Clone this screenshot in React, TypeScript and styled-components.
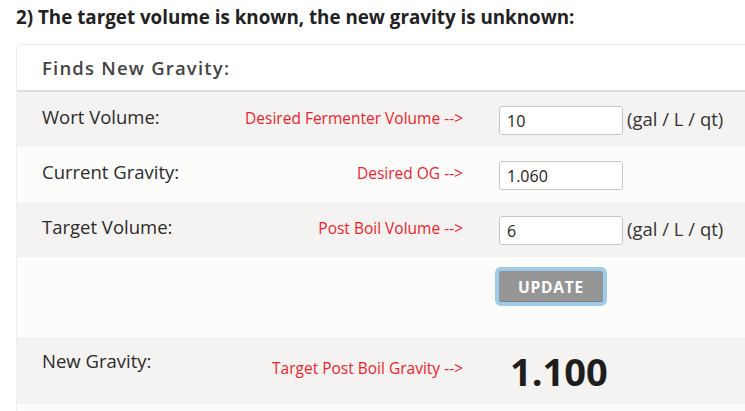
import React from 'react';
import styled, { createGlobalStyle } from 'styled-components';

const GlobalStyle = createGlobalStyle`
  html, body {
    margin: 0;
    padding: 0;
    background: #ffffff;
    overflow: hidden;
  }
  body {
    font-family: "Open Sans", "Liberation Sans", sans-serif;
    color: #333;
  }
`;

const Page = styled.div`
  padding: 4px 0 0 16px;
`;

const Heading = styled.h2`
  margin: 0 0 14px 0;
  font-family: "Open Sans", sans-serif;
  font-weight: 700;
  font-size: 18.8px;
  line-height: 26px;
  color: #222;
  white-space: nowrap;
`;

const Panel = styled.div`
  border: 1px solid #eeeeee;
  border-right: none;
  border-radius: 5px 0 0 0;
  background: #fcfcfb;
  overflow: hidden;
`;

const PanelHeader = styled.div`
  height: 45px;
  border-bottom: 2px solid #dcdcdc;
  background: #ffffff;
  display: flex;
  align-items: center;
  padding-left: 25px;
  font-size: 18.5px;
  font-weight: 600;
  letter-spacing: 1.2px;
  color: #444;
`;

const Row = styled.div<{ $shade: boolean; $h: number }>`
  display: grid;
  grid-template-columns: 200px 221px 160px auto;
  align-items: start;
  height: ${({ $h }) => $h}px;
  background: ${({ $shade }) => ($shade ? '#f4f3f1' : '#fcfcfb')};
  padding-left: 25px;
  box-sizing: border-box;
`;

const Label = styled.div<{ $top: number }>`
  padding-top: ${({ $top }) => $top}px;
  font-size: 18.5px;
  line-height: 24px;
  color: #2b2b2b;
  white-space: nowrap;
`;

const Hint = styled.div<{ $top: number }>`
  padding-top: ${({ $top }) => $top}px;
  text-align: right;
  font-size: 15.5px;
  line-height: 20px;
  color: #f2222c;
  white-space: nowrap;
`;

const InputCell = styled.div`
  padding-top: 14px;
  padding-left: 36px;
`;

const Field = styled.input`
  width: 124px;
  height: 29px;
  box-sizing: border-box;
  border: 1px solid #c6c6c6;
  border-radius: 3px;
  padding: 0 7px;
  font-family: "Open Sans", sans-serif;
  font-size: 16px;
  color: #222;
  background: #fff;
  outline: none;
`;

const Unit = styled.div`
  padding-top: 14px;
  padding-left: 4px;
  font-size: 18.5px;
  line-height: 26px;
  color: #333;
  white-space: nowrap;
`;

const ButtonCell = styled.div`
  grid-column: 3;
  padding-top: 10px;
  padding-left: 32px;
`;

const UpdateButton = styled.button`
  width: 112px;
  height: 39px;
  box-sizing: border-box;
  border: 4px solid #9dcbea;
  border-radius: 6px;
  background: #959595;
  color: #fff;
  font-family: "Open Sans", sans-serif;
  font-weight: 700;
  font-size: 15.5px;
  letter-spacing: 0.8px;
  padding: 0;
  box-shadow: inset 0 -1px 0 #7c7c7c;
`;

const Result = styled.div`
  padding-top: 9px;
  padding-left: 47px;
  font-size: 38px;
  font-weight: 700;
  line-height: 50px;
  color: #1e1e1e;
`;

const Footer = styled.div`
  height: 20px;
  background: #fcfcfb;
`;

const rows = [
  { label: 'Wort Volume:', hint: 'Desired Fermenter Volume -->', value: '10', unit: true },
  { label: 'Current Gravity:', hint: 'Desired OG -->', value: '1.060', unit: false },
  { label: 'Target Volume:', hint: 'Post Boil Volume -->', value: '6', unit: true },
];

export default function App() {
  return (
    <>
      <GlobalStyle />
      <Page>
        <Heading>2) The target volume is known, the new gravity is unknown:</Heading>
        <Panel>
          <PanelHeader>Finds New Gravity:</PanelHeader>
          {rows.map((r, i) => (
            <Row key={r.label} $shade={i % 2 === 0} $h={55}>
              <Label $top={13}>{r.label}</Label>
              <Hint $top={16}>{r.hint}</Hint>
              <InputCell>
                <Field defaultValue={r.value} />
              </InputCell>
              {r.unit ? <Unit>(gal / L / qt)</Unit> : <div />}
            </Row>
          ))}
          <Row $shade={false} $h={80}>
            <ButtonCell>
              <UpdateButton>UPDATE</UpdateButton>
            </ButtonCell>
          </Row>
          <Row $shade={true} $h={67}>
            <Label $top={12}>New Gravity:</Label>
            <Hint $top={21}>{'Target Post Boil Gravity -->'}</Hint>
            <Result>1.100</Result>
          </Row>
          <Footer />
        </Panel>
      </Page>
    </>
  );
}
